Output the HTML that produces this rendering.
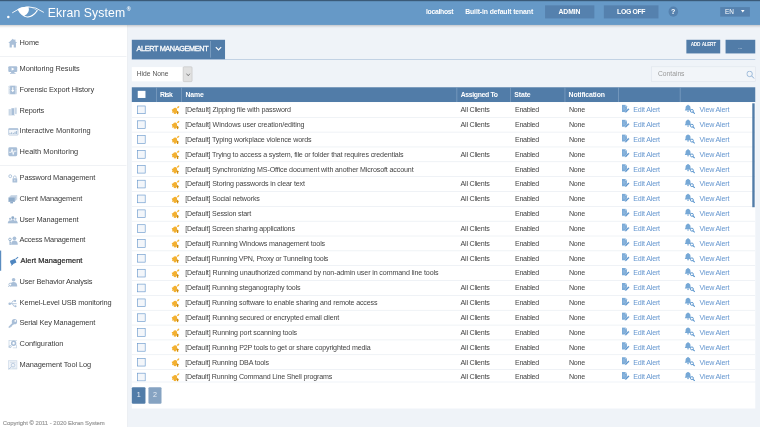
<!DOCTYPE html>
<html><head><meta charset="utf-8"><title>Ekran System</title>
<style>
html,body{margin:0;padding:0;width:760px;height:427px;overflow:hidden;background:#eff3f8;}
body{font-family:"Liberation Sans",sans-serif;}
#w{position:absolute;left:0;top:0;width:1280px;height:720px;transform:scale(0.59375);transform-origin:0 0;background:#eff3f8;color:#333;}
#in{position:absolute;left:-40px;top:-40px;width:1360px;height:800px;background:#eff3f8;filter:blur(0.5px)}
#c{position:absolute;left:40px;top:40px;width:1280px;height:720px}
#w div,#w span,#w a,#w b{white-space:nowrap}
#hd{position:absolute;left:-40px;top:-40px;width:1360px;height:82px;background:#6699c7;box-shadow:0 1px 4px rgba(0,0,0,.22);z-index:5}
#hdt{position:absolute;left:-40px;top:-40px;width:1360px;height:42px;background:#3a5a78;z-index:6}
#logo{position:absolute;left:0;top:0;z-index:7}
#brand{position:absolute;left:80.500px;top:8.500px;font-size:20.600px;line-height:24px;color:#fff;letter-spacing:.200px;z-index:7}
#brand sup{font-size:9px;font-weight:bold;position:absolute;left:133px;top:-4.500px;letter-spacing:0}
.ht{position:absolute;top:11.500px;font-size:11.500px;line-height:14px;font-weight:bold;color:#fff;z-index:7}
.hb{position:absolute;top:8.500px;height:22px;line-height:22px;background:#5581ae;color:#fff;font-size:11.500px;font-weight:bold;text-align:center;z-index:7;letter-spacing:-.200px}
#q{position:absolute;left:1125.500px;top:11.300px;width:16.600px;height:16.600px;border-radius:9px;background:#5581ae;color:#fff;font-size:12px;font-weight:bold;text-align:center;line-height:17px;z-index:7}
#lang{position:absolute;left:1213px;top:12.200px;width:49.500px;height:16.200px;background:#5581ae;color:#fff;font-size:10.800px;line-height:16.500px;z-index:7}
#lang span{position:absolute;left:8px}
#lang i{position:absolute;left:35px;top:4.800px;border:3.300px solid transparent;border-top:4.200px solid #fff;}
#sb{position:absolute;left:-40px;top:42px;width:254.600px;height:718px;background:#fff;border-right:1px solid #e3e7ec;box-sizing:border-box}
#sbi{position:absolute;left:40px;top:0;width:214px;height:678px}
.mi{position:absolute;left:0;width:213px;height:34px;font-size:12.500px;color:#3a3a3a;letter-spacing:-.180px}
.mi span{position:absolute;left:33px;top:7px;line-height:20px;transform:scaleY(1.05);transform-origin:0 72%}
.mi svg{position:absolute;left:13.500px;top:10.500px;overflow:visible}
.mi.active{color:#2c2c2c;-webkit-text-stroke:.400px #2c2c2c}
.mi.active u{position:absolute;left:0;top:0;width:2px;height:34px;background:#5b8dc0}
.mi.active span{left:34.500px}
.mi.active svg{left:15.500px}
.sep{position:absolute;left:0;width:213px;height:1px;background:#e6e9ee}
#copy{position:absolute;left:4.500px;top:706.500px;font-size:10px;color:#999;letter-spacing:-.040px;-webkit-text-stroke:.300px #999}
#tab{position:absolute;left:222.200px;top:66.800px;height:33px;width:156.600px;background:#517ca8;color:#fff}
#tab b{position:absolute;left:7.800px;top:7.200px;font-size:12.300px;line-height:16px;letter-spacing:-.620px;font-weight:normal;-webkit-text-stroke:.450px #fff}
#tab u{position:absolute;left:131.400px;top:2px;width:1px;height:28.500px;background:#94b1cf}
#tab svg{position:absolute;left:139.500px;top:11.200px}
#tl{position:absolute;left:222.200px;top:99.500px;width:1049.500px;height:1.100px;background:#a3bcd6}
.btn{position:absolute;top:66.500px;height:23.200px;background:#517ca8;color:#fff;font-size:8px;font-weight:bold;text-align:center;line-height:17.500px;letter-spacing:-.600px;word-spacing:1.500px}
#sel{position:absolute;left:222.300px;top:113px;width:86.100px;height:24px;background:#fff;font-size:11.300px;line-height:24px;color:#555}
#sel span{position:absolute;left:8px;top:-1.400px}
#selb{position:absolute;left:308.400px;top:112.200px;width:13.500px;height:24.200px;background:#e1e1e1;border:.800px solid #c2c2c2;border-radius:2px}
#selb svg{position:absolute;left:3.200px;top:9.500px}
#srch{position:absolute;left:1097.200px;top:112.300px;width:173.500px;height:23.800px;border:1px solid #dde3eb;background:#f2f5f9;font-size:11.300px;color:#999;line-height:24px}
#srch span{position:absolute;left:10px;top:-1px}
#srch svg{position:absolute;left:158.500px;top:6.200px}
#th{position:absolute;left:222.200px;top:147.200px;width:1049.500px;height:24.600px;background:#517ca8;color:#fff;font-size:11.600px;font-weight:bold;letter-spacing:-.300px}
#th div{position:absolute;top:0;height:24.600px;line-height:24.300px;border-left:1.200px solid #8aa9c9;padding-left:6px}
#th i{position:absolute;left:9.500px;top:6px;width:13px;height:12px;background:#fff}
#tb{position:absolute;left:222.200px;top:171.800px;width:1049.500px;height:470.900px;background:#fff;overflow:hidden}
.r{position:absolute;left:0;width:1049.500px;height:25px;font-size:12px;color:#444;letter-spacing:-.170px}
.r u{position:absolute;left:0;top:0;width:1049.500px;height:1.100px;background:#e4eaf0}
.r span{position:absolute;top:5.700px;line-height:14px;transform:scaleY(1.1);transform-origin:0 80%}
.r a{position:absolute;top:5.700px;line-height:14px;color:#6496cf;transform:scaleY(1.1);transform-origin:0 80%}
.r i{position:absolute;left:9.300px;top:5.800px;width:12px;height:12.200px;border:1.800px solid #6193ca;background:#f3f6fa}
.r .rk{position:absolute;left:66.500px;top:4.800px}
.r .ei{position:absolute;left:825px;top:4.500px}
.r .vi{position:absolute;left:931px;top:4px}
#scr{position:absolute;left:1267px;top:174px;width:3.700px;height:174.600px;background:#517ca8}
#pg{position:absolute;left:222.200px;top:642.700px;width:1049.500px;height:44.900px;border-top:1px solid #e9eef3;box-sizing:border-box;background:#fff}
.p{position:absolute;top:8.500px;width:22.700px;height:27.800px;border-radius:2px;color:#e8eef5;font-size:12px;text-align:center;line-height:26.500px}
</style></head><body><div id="w"><div id="in"><div id="c">

<div id="hd"></div><div id="hdt"></div>
<svg id="logo" width="80" height="42" viewBox="0 0 80 42"><circle cx="14" cy="28.700" r="2.100" fill="#fff"/><path d="M20.500 21.700 Q47 1.500 73.800 20.900" fill="none" stroke="#fff" stroke-width="1.500"/><path d="M29.200 15.500 Q46 6.500 64 17.500 Q55 30.200 46 29.300 Q36 28.300 29.200 15.500Z" fill="#fff"/><path d="M48.300 12.700 Q56 12.700 61.800 17.700 Q54.500 27.300 46.500 27.700 Q43.500 27.700 41 26.400 Q50.500 22 48.300 12.700Z" fill="#6699c7"/></svg>
<div id="brand">Ekran System<sup>&#174;</sup></div>
<div class="ht" style="left:717.500px;letter-spacing:-.500px">localhost</div>
<div class="ht" style="left:783.500px;letter-spacing:-.170px">Built-in default tenant</div>
<div class="hb" style="left:917.500px;width:83px">ADMIN</div>
<div class="hb" style="left:1017px;width:92px;letter-spacing:-.550px">LOG OFF</div>
<div id="q">?</div>
<div id="lang"><span>EN</span><i></i></div>

<div id="sb"><div id="sbi">
<div class="sep" style="top:52.7px"></div>
<div class="sep" style="top:235.9px"></div>
<div class="mi" style="top:12.4px"><svg width="15" height="15" viewBox="0 0 16 16"><path d="M8 0.500 L0 8 H2.300 V16 H6.300 V11 H9.700 V16 H13.700 V8 H16 L12.800 5 V1.500 H10.800 V3.100Z" fill="#a9bfd8"/></svg><span style="letter-spacing:-0.167px">Home</span></div>
<div class="mi" style="top:57.0px"><svg width="15" height="15" viewBox="0 0 16 16"><rect x="0" y="1.500" width="16" height="10.500" rx="2" fill="#a9bfd8"/><path d="M6 4 L11 6.800 L6 9.600Z" fill="#fff"/><path d="M5.500 12 H10.500 L11.500 14 H13 V15 H3 V14 H4.500Z" fill="#a9bfd8"/></svg><span style="letter-spacing:-0.126px">Monitoring Results</span></div>
<div class="mi" style="top:91.6px"><svg width="15" height="15" viewBox="0 0 16 16"><rect x="0.500" y="0.500" width="15" height="15" rx="1" fill="#c9d7e6"/><rect x="3.500" y="0.500" width="9" height="15" fill="#a9bfd8"/><path d="M1.300 2.500h1.400M1.300 5.500h1.400M1.300 8.500h1.400M1.300 11.500h1.400M1.300 14h1.400M13.300 2.500h1.400M13.300 5.500h1.400M13.300 8.500h1.400M13.300 11.500h1.400M13.300 14h1.400" stroke="#fff" stroke-width="1"/><path d="M7 3 H9 V8 H11 L8 12 L5 8 H7Z" fill="#fff"/></svg><span style="letter-spacing:-0.201px">Forensic Export History</span></div>
<div class="mi" style="top:127.0px"><svg width="15" height="15" viewBox="0 0 16 16"><rect x="0.500" y="4" width="5" height="11.500" fill="#c9d7e6"/><rect x="5" y="2" width="6.500" height="13.500" fill="#a9bfd8" stroke="#fff" stroke-width=".800"/><rect x="11" y="1" width="4.500" height="12" fill="#c9d7e6" stroke="#fff" stroke-width=".600"/></svg><span style="letter-spacing:-0.374px">Reports</span></div>
<div class="mi" style="top:161.2px"><svg width="15" height="15" viewBox="0 0 16 16"><rect x="0.600" y="2.600" width="16.800" height="11.800" rx="1.200" fill="#f4f7fb" stroke="#a9bfd8" stroke-width="1.200"/><rect x="0.600" y="2.600" width="16.800" height="2.400" fill="#a9bfd8"/><path d="M3 12.500v-2M6 12.500v-3M9 12.500v-2M12 12.500v-4M14.500 12.500v-5.500" stroke="#8eabc9" stroke-width="1.500"/></svg><span style="letter-spacing:0.015px">Interactive Monitoring</span></div>
<div class="mi" style="top:195.9px"><svg width="15" height="15" viewBox="0 0 16 16"><rect x="0" y="0" width="16" height="16" rx="2.500" fill="#a9bfd8"/><path d="M1.500 9 H5.500 L6.800 3.500 L8.800 13 L10.300 7 H14.500" fill="none" stroke="#fff" stroke-width="1.500"/></svg><span style="letter-spacing:0.049px">Health Monitoring</span></div>
<div class="mi" style="top:240.7px"><svg width="15" height="15" viewBox="0 0 16 16"><circle cx="3.500" cy="4" r="2.600" fill="none" stroke="#a9bfd8" stroke-width="1.600"/><rect x="7.500" y="7.500" width="8.500" height="8" rx="1" fill="#a9bfd8"/><path d="M9.300 7.500 V5.800 a2.400 2.400 0 0 1 4.800 0 V7.500" fill="none" stroke="#a9bfd8" stroke-width="1.500"/><rect x="11.200" y="10" width="1.200" height="3" fill="#fff"/></svg><span style="letter-spacing:-0.212px">Password Management</span></div>
<div class="mi" style="top:275.6px"><svg width="15" height="15" viewBox="0 0 16 16"><rect x="4" y="0.500" width="12" height="8.500" rx="1" fill="#c9d7e6"/><rect x="2" y="2.500" width="12" height="8.500" rx="1" fill="#a9bfd8" stroke="#fff" stroke-width=".500"/><rect x="0" y="4.500" width="12" height="8.500" rx="1" fill="#8eabc9" stroke="#fff" stroke-width=".500"/><rect x="3.500" y="13" width="5" height="2.500" fill="#8eabc9"/></svg><span style="letter-spacing:-0.175px">Client Management</span></div>
<div class="mi" style="top:310.5px"><svg width="15" height="15" viewBox="0 0 16 16"><circle cx="8" cy="3.800" r="2.600" fill="#8eabc9"/><circle cx="3.200" cy="6" r="2" fill="#a9bfd8"/><circle cx="12.800" cy="6" r="2" fill="#a9bfd8"/><path d="M-0.500 13 c0-3 1.500-4.700 3.600-4.700 c1 0 1.800 .400 2.300 1 c.500-1.800 1.300-2.600 2.600-2.600 s2.100 .800 2.600 2.600 c.500-.600 1.300-1 2.300-1 c2.100 0 3.600 1.700 3.600 4.700Z" fill="#a9bfd8"/><rect x="-1" y="12.300" width="18" height="1.700" rx=".800" fill="#8eabc9"/></svg><span style="letter-spacing:-0.256px">User Management</span></div>
<div class="mi" style="top:345.3px"><svg width="15" height="15" viewBox="0 0 16 16"><circle cx="11" cy="3.600" r="3.300" fill="#a9bfd8"/><path d="M5 15 c0-5.500 2.500-7.500 6-7.500 s6 2 6 7.500Z" fill="#a9bfd8"/><circle cx="3" cy="5.500" r="2.300" fill="#fff" stroke="#8eabc9" stroke-width="1.500"/><path d="M3 8 V15.500 M3 11.500 H5 M3 14 H5" fill="none" stroke="#8eabc9" stroke-width="1.400"/></svg><span style="letter-spacing:-0.374px">Access Management</span></div>
<div class="mi active" style="top:380.2px"><u></u><svg width="15" height="15" viewBox="0 0 16 16"><path d="M1 6.500 L10 3 L12.500 9.500 L4.500 13.500 C2 12 1 9.500 1 6.500Z" fill="#4f86c0"/><path d="M11 3.500 L15.500 0" stroke="#4f86c0" stroke-width="1.800"/><path d="M4 12 L2.500 16 L7 13Z" fill="#4f86c0"/></svg><span style="letter-spacing:0.147px">Alert Management</span></div>
<div class="mi" style="top:415.1px"><svg width="15" height="15" viewBox="0 0 16 16"><circle cx="9.500" cy="3.500" r="3.200" fill="#a9bfd8"/><path d="M3 15.500 c0-6 2.500-8 6.500-8 s6.500 2 6.500 8Z" fill="#a9bfd8"/><circle cx="3.500" cy="12" r="2.500" fill="#fff" stroke="#8eabc9" stroke-width="1.200"/><path d="M1.800 14 L0 16" stroke="#8eabc9" stroke-width="1.300"/></svg><span style="letter-spacing:-0.279px">User Behavior Analysis</span></div>
<div class="mi" style="top:450.0px"><svg width="15" height="15" viewBox="0 0 16 16"><path d="M2 9 H15 M5 9 L8.500 4 H11 M7 9 L10 13.500 H12.500" fill="none" stroke="#a9bfd8" stroke-width="1.500"/><circle cx="2.500" cy="9" r="2.300" fill="#a9bfd8"/><rect x="10.500" y="2.300" width="3.400" height="3.400" fill="#a9bfd8"/><circle cx="13" cy="13.500" r="1.800" fill="#a9bfd8"/></svg><span style="letter-spacing:-0.239px">Kernel-Level USB monitoring</span></div>
<div class="mi" style="top:484.9px"><svg width="15" height="15" viewBox="0 0 16 16"><circle cx="11" cy="5" r="4.800" fill="#a9bfd8"/><circle cx="12.500" cy="3.800" r="1.500" fill="#fff"/><path d="M7.500 7 L0.500 14 V16 H3.500 L4.200 14.200 H6 L6.500 12.300 L10 9.500Z" fill="#a9bfd8"/></svg><span style="letter-spacing:-0.292px">Serial Key Management</span></div>
<div class="mi" style="top:519.7px"><svg width="15" height="15" viewBox="0 0 16 16"><path d="M0.500 0.500 H15.500 V2 H2 V15 H0.500Z M15.500 9 V15.500 H8 V14 H14 V9Z" fill="#c9d7e6"/><circle cx="9.500" cy="6.500" r="3.500" fill="none" stroke="#a9bfd8" stroke-width="2.800"/><circle cx="3.500" cy="12.500" r="1.800" fill="none" stroke="#a9bfd8" stroke-width="1.600"/></svg><span style="letter-spacing:-0.054px">Configuration</span></div>
<div class="mi" style="top:554.6px"><svg width="15" height="15" viewBox="0 0 16 16"><rect x="0.600" y="0.600" width="14.800" height="14.800" fill="#f0f4f9" stroke="#c9d7e6" stroke-width="1.200"/><path d="M3 3.500 H13" stroke="#c9d7e6" stroke-width="1.200"/><circle cx="8.500" cy="8.500" r="3.300" fill="none" stroke="#a9bfd8" stroke-width="1.200"/><path d="M6 11 L1 16" stroke="#a9bfd8" stroke-width="1.500"/><path d="M7 14 H14" stroke="#c9d7e6" stroke-width="1"/></svg><span style="letter-spacing:-0.169px">Management Tool Log</span></div>
</div></div>
<div id="copy">Copyright &#169; 2011 - 2020 Ekran System</div>
<div id="tab"><b>ALERT MANAGEMENT</b><u></u><svg width="12" height="8" viewBox="0 0 12 8"><path d="M1.500 1.500 L6 6 L10.500 1.500" fill="none" stroke="#fff" stroke-width="1.900"/></svg></div>
<div id="tl"></div>
<div class="btn" style="left:1155.900px;width:57.100px">ADD ALERT</div>
<div class="btn" style="left:1221.900px;width:49.800px;line-height:26px;letter-spacing:0;font-weight:normal">...</div>
<div id="sel"><span>Hide None</span></div><div id="selb"><svg width="8" height="6" viewBox="0 0 8 6"><path d="M1 1 L4 4.500 L7 1" fill="none" stroke="#555" stroke-width="1.200"/></svg></div>
<div id="srch"><span>Contains</span><svg width="14" height="14" viewBox="0 0 14 14"><circle cx="5.500" cy="5.500" r="4.600" fill="none" stroke="#86aad2" stroke-width="1.300"/><path d="M9 9 L13.300 13.300" stroke="#86aad2" stroke-width="1.600"/></svg></div>

<div id="th"><i></i>
<div style="left:40.4px;letter-spacing:-1.000px">Risk</div>
<div style="left:83.1px;letter-spacing:-0.165px">Name</div>
<div style="left:546.7px;letter-spacing:-0.592px">Assigned To</div>
<div style="left:636.8px;letter-spacing:-0.147px">State</div>
<div style="left:728.4px;letter-spacing:-0.232px">Notification</div>
<div style="left:818.5px;letter-spacing:0.000px"></div>
<div style="left:923.0px;letter-spacing:0.000px"></div>
</div><div id="tb">
<div class="r" style="top:0.10px"><u style="top:25.1px"></u><i></i><svg class="rk" width="14" height="16" viewBox="0 0 14 16"><path transform="translate(-0.500 0)" d="M0 7.300 L2.800 7 L4.500 4.800 L7.500 4.400 L9.600 6.600 L9.800 9.500 L9 13 L7 15 L4.200 14.600 L4 12.300 L1 13 L2 10.300Z" fill="#f3b030"/><path d="M8.300 5.600 L10.200 4.200" stroke="#f3b030" stroke-width="1.200"/><ellipse cx="11.200" cy="3.400" rx="2.300" ry="1.300" transform="rotate(-45 11.200 3.400)" fill="#f5b63c"/><path d="M10.100 9.600 L12.600 12.600 H11.200 V15.600 H9 V12.600 H7.600Z" fill="#d18d0a"/></svg><span style="left:89.7px;letter-spacing:-0.204px">[Default] Zipping file with password</span><span style="left:553.5px;letter-spacing:-0.415px">All Clients</span><span style="left:645.2px;letter-spacing:-0.546px">Enabled</span><span style="left:736.1px;letter-spacing:-0.482px">None</span><svg class="ei" width="14" height="15" viewBox="0 0 14 15"><path d="M0.600 0.500 H6.600 L8.900 2.800 V12.500 H0.600Z" fill="#7aaad7"/><path d="M6.300 0.800 V3.100 H8.600" fill="none" stroke="#dfeaf5" stroke-width=".800"/><path d="M2.300 4.500h3M2.300 6.500h4.500M2.300 8.500h3.500" stroke="#a9c7e6" stroke-width=".700"/><path d="M5.200 14 L5.800 11.500 L11.300 6.200 L13.200 8.100 L7.700 13.500Z" fill="#5a93cc" stroke="#fff" stroke-width=".600"/></svg><a style="left:844.4px;letter-spacing:-0.319px">Edit Alert</a><svg class="vi" width="18" height="16" viewBox="0 0 18 16"><path d="M5.800 0 c0.700 0 1.100 0.400 1.100 1.100 c2.300 0.700 3.100 2.600 3.100 5.200 c0 1.800 0.700 2.800 1.600 3.700 H0 c0.900-0.900 1.600-1.900 1.600-3.700 c0-2.600 0.800-4.500 3.100-5.200 c0-0.700 0.400-1.100 1.100-1.100Z" fill="#76a8d6"/><circle cx="5.800" cy="11.300" r="1.400" fill="#76a8d6"/><circle cx="12.300" cy="10.800" r="2.500" fill="#fff" stroke="#5f98cf" stroke-width="1.600"/><path d="M14.300 12.800 L16.600 15.100" stroke="#5f98cf" stroke-width="1.900" stroke-linecap="round"/></svg><a style="left:956.1px;letter-spacing:-0.331px">View Alert</a></div>
<div class="r" style="top:25.10px"><u style="top:25.1px"></u><i></i><svg class="rk" width="14" height="16" viewBox="0 0 14 16"><path transform="translate(-0.500 0)" d="M0 7.300 L2.800 7 L4.500 4.800 L7.500 4.400 L9.600 6.600 L9.800 9.500 L9 13 L7 15 L4.200 14.600 L4 12.300 L1 13 L2 10.300Z" fill="#f3b030"/><path d="M8.300 5.600 L10.200 4.200" stroke="#f3b030" stroke-width="1.200"/><ellipse cx="11.200" cy="3.400" rx="2.300" ry="1.300" transform="rotate(-45 11.200 3.400)" fill="#f5b63c"/><path d="M10.100 9.600 L12.600 12.600 H11.200 V15.600 H9 V12.600 H7.600Z" fill="#d18d0a"/></svg><span style="left:89.7px;letter-spacing:-0.187px">[Default] Windows user creation/editing</span><span style="left:553.5px;letter-spacing:-0.415px">All Clients</span><span style="left:645.2px;letter-spacing:-0.546px">Enabled</span><span style="left:736.1px;letter-spacing:-0.482px">None</span><svg class="ei" width="14" height="15" viewBox="0 0 14 15"><path d="M0.600 0.500 H6.600 L8.900 2.800 V12.500 H0.600Z" fill="#7aaad7"/><path d="M6.300 0.800 V3.100 H8.600" fill="none" stroke="#dfeaf5" stroke-width=".800"/><path d="M2.300 4.500h3M2.300 6.500h4.500M2.300 8.500h3.500" stroke="#a9c7e6" stroke-width=".700"/><path d="M5.200 14 L5.800 11.500 L11.300 6.200 L13.200 8.100 L7.700 13.500Z" fill="#5a93cc" stroke="#fff" stroke-width=".600"/></svg><a style="left:844.4px;letter-spacing:-0.319px">Edit Alert</a><svg class="vi" width="18" height="16" viewBox="0 0 18 16"><path d="M5.800 0 c0.700 0 1.100 0.400 1.100 1.100 c2.300 0.700 3.100 2.600 3.100 5.200 c0 1.800 0.700 2.800 1.600 3.700 H0 c0.900-0.900 1.600-1.900 1.600-3.700 c0-2.600 0.800-4.500 3.100-5.200 c0-0.700 0.400-1.100 1.100-1.100Z" fill="#76a8d6"/><circle cx="5.800" cy="11.300" r="1.400" fill="#76a8d6"/><circle cx="12.300" cy="10.800" r="2.500" fill="#fff" stroke="#5f98cf" stroke-width="1.600"/><path d="M14.300 12.800 L16.600 15.100" stroke="#5f98cf" stroke-width="1.900" stroke-linecap="round"/></svg><a style="left:956.1px;letter-spacing:-0.331px">View Alert</a></div>
<div class="r" style="top:50.10px"><u style="top:25.1px"></u><i></i><svg class="rk" width="14" height="16" viewBox="0 0 14 16"><path transform="translate(-0.500 0)" d="M0 7.300 L2.800 7 L4.500 4.800 L7.500 4.400 L9.600 6.600 L9.800 9.500 L9 13 L7 15 L4.200 14.600 L4 12.300 L1 13 L2 10.300Z" fill="#f3b030"/><path d="M8.300 5.600 L10.200 4.200" stroke="#f3b030" stroke-width="1.200"/><ellipse cx="11.200" cy="3.400" rx="2.300" ry="1.300" transform="rotate(-45 11.200 3.400)" fill="#f5b63c"/><path d="M10.100 9.600 L12.600 12.600 H11.200 V15.600 H9 V12.600 H7.600Z" fill="#d18d0a"/></svg><span style="left:89.7px;letter-spacing:-0.256px">[Default] Typing workplace violence words</span><span style="left:553.5px;letter-spacing:-0.415px"></span><span style="left:645.2px;letter-spacing:-0.546px">Enabled</span><span style="left:736.1px;letter-spacing:-0.482px">None</span><svg class="ei" width="14" height="15" viewBox="0 0 14 15"><path d="M0.600 0.500 H6.600 L8.900 2.800 V12.500 H0.600Z" fill="#7aaad7"/><path d="M6.300 0.800 V3.100 H8.600" fill="none" stroke="#dfeaf5" stroke-width=".800"/><path d="M2.300 4.500h3M2.300 6.500h4.500M2.300 8.500h3.500" stroke="#a9c7e6" stroke-width=".700"/><path d="M5.200 14 L5.800 11.500 L11.300 6.200 L13.200 8.100 L7.700 13.500Z" fill="#5a93cc" stroke="#fff" stroke-width=".600"/></svg><a style="left:844.4px;letter-spacing:-0.319px">Edit Alert</a><svg class="vi" width="18" height="16" viewBox="0 0 18 16"><path d="M5.800 0 c0.700 0 1.100 0.400 1.100 1.100 c2.300 0.700 3.100 2.600 3.100 5.200 c0 1.800 0.700 2.800 1.600 3.700 H0 c0.900-0.900 1.600-1.900 1.600-3.700 c0-2.600 0.800-4.500 3.100-5.200 c0-0.700 0.400-1.100 1.100-1.100Z" fill="#76a8d6"/><circle cx="5.800" cy="11.300" r="1.400" fill="#76a8d6"/><circle cx="12.300" cy="10.800" r="2.500" fill="#fff" stroke="#5f98cf" stroke-width="1.600"/><path d="M14.300 12.800 L16.600 15.100" stroke="#5f98cf" stroke-width="1.900" stroke-linecap="round"/></svg><a style="left:956.1px;letter-spacing:-0.331px">View Alert</a></div>
<div class="r" style="top:75.10px"><u style="top:25.1px"></u><i></i><svg class="rk" width="14" height="16" viewBox="0 0 14 16"><path transform="translate(-0.500 0)" d="M0 7.300 L2.800 7 L4.500 4.800 L7.500 4.400 L9.600 6.600 L9.800 9.500 L9 13 L7 15 L4.200 14.600 L4 12.300 L1 13 L2 10.300Z" fill="#f3b030"/><path d="M8.300 5.600 L10.200 4.200" stroke="#f3b030" stroke-width="1.200"/><ellipse cx="11.200" cy="3.400" rx="2.300" ry="1.300" transform="rotate(-45 11.200 3.400)" fill="#f5b63c"/><path d="M10.100 9.600 L12.600 12.600 H11.200 V15.600 H9 V12.600 H7.600Z" fill="#d18d0a"/></svg><span style="left:89.7px;letter-spacing:-0.249px">[Default] Trying to access a system, file or folder that requires credentials</span><span style="left:553.5px;letter-spacing:-0.415px">All Clients</span><span style="left:645.2px;letter-spacing:-0.546px">Enabled</span><span style="left:736.1px;letter-spacing:-0.482px">None</span><svg class="ei" width="14" height="15" viewBox="0 0 14 15"><path d="M0.600 0.500 H6.600 L8.900 2.800 V12.500 H0.600Z" fill="#7aaad7"/><path d="M6.300 0.800 V3.100 H8.600" fill="none" stroke="#dfeaf5" stroke-width=".800"/><path d="M2.300 4.500h3M2.300 6.500h4.500M2.300 8.500h3.500" stroke="#a9c7e6" stroke-width=".700"/><path d="M5.200 14 L5.800 11.500 L11.300 6.200 L13.200 8.100 L7.700 13.500Z" fill="#5a93cc" stroke="#fff" stroke-width=".600"/></svg><a style="left:844.4px;letter-spacing:-0.319px">Edit Alert</a><svg class="vi" width="18" height="16" viewBox="0 0 18 16"><path d="M5.800 0 c0.700 0 1.100 0.400 1.100 1.100 c2.300 0.700 3.100 2.600 3.100 5.200 c0 1.800 0.700 2.800 1.600 3.700 H0 c0.900-0.900 1.600-1.900 1.600-3.700 c0-2.600 0.800-4.500 3.100-5.200 c0-0.700 0.400-1.100 1.100-1.100Z" fill="#76a8d6"/><circle cx="5.800" cy="11.300" r="1.400" fill="#76a8d6"/><circle cx="12.300" cy="10.800" r="2.500" fill="#fff" stroke="#5f98cf" stroke-width="1.600"/><path d="M14.300 12.800 L16.600 15.100" stroke="#5f98cf" stroke-width="1.900" stroke-linecap="round"/></svg><a style="left:956.1px;letter-spacing:-0.331px">View Alert</a></div>
<div class="r" style="top:100.10px"><u style="top:25.1px"></u><i></i><svg class="rk" width="14" height="16" viewBox="0 0 14 16"><path transform="translate(-0.500 0)" d="M0 7.300 L2.800 7 L4.500 4.800 L7.500 4.400 L9.600 6.600 L9.800 9.500 L9 13 L7 15 L4.200 14.600 L4 12.300 L1 13 L2 10.300Z" fill="#f3b030"/><path d="M8.300 5.600 L10.200 4.200" stroke="#f3b030" stroke-width="1.200"/><ellipse cx="11.200" cy="3.400" rx="2.300" ry="1.300" transform="rotate(-45 11.200 3.400)" fill="#f5b63c"/><path d="M10.100 9.600 L12.600 12.600 H11.200 V15.600 H9 V12.600 H7.600Z" fill="#d18d0a"/></svg><span style="left:89.7px;letter-spacing:-0.239px">[Default] Synchronizing MS-Office document with another Microsoft account</span><span style="left:553.5px;letter-spacing:-0.415px"></span><span style="left:645.2px;letter-spacing:-0.546px">Enabled</span><span style="left:736.1px;letter-spacing:-0.482px">None</span><svg class="ei" width="14" height="15" viewBox="0 0 14 15"><path d="M0.600 0.500 H6.600 L8.900 2.800 V12.500 H0.600Z" fill="#7aaad7"/><path d="M6.300 0.800 V3.100 H8.600" fill="none" stroke="#dfeaf5" stroke-width=".800"/><path d="M2.300 4.500h3M2.300 6.500h4.500M2.300 8.500h3.500" stroke="#a9c7e6" stroke-width=".700"/><path d="M5.200 14 L5.800 11.500 L11.300 6.200 L13.200 8.100 L7.700 13.500Z" fill="#5a93cc" stroke="#fff" stroke-width=".600"/></svg><a style="left:844.4px;letter-spacing:-0.319px">Edit Alert</a><svg class="vi" width="18" height="16" viewBox="0 0 18 16"><path d="M5.800 0 c0.700 0 1.100 0.400 1.100 1.100 c2.300 0.700 3.100 2.600 3.100 5.200 c0 1.800 0.700 2.800 1.600 3.700 H0 c0.900-0.900 1.600-1.900 1.600-3.700 c0-2.600 0.800-4.500 3.100-5.200 c0-0.700 0.400-1.100 1.100-1.100Z" fill="#76a8d6"/><circle cx="5.800" cy="11.300" r="1.400" fill="#76a8d6"/><circle cx="12.300" cy="10.800" r="2.500" fill="#fff" stroke="#5f98cf" stroke-width="1.600"/><path d="M14.300 12.800 L16.600 15.100" stroke="#5f98cf" stroke-width="1.900" stroke-linecap="round"/></svg><a style="left:956.1px;letter-spacing:-0.331px">View Alert</a></div>
<div class="r" style="top:125.10px"><u style="top:25.1px"></u><i></i><svg class="rk" width="14" height="16" viewBox="0 0 14 16"><path transform="translate(-0.500 0)" d="M0 7.300 L2.800 7 L4.500 4.800 L7.500 4.400 L9.600 6.600 L9.800 9.500 L9 13 L7 15 L4.200 14.600 L4 12.300 L1 13 L2 10.300Z" fill="#f3b030"/><path d="M8.300 5.600 L10.200 4.200" stroke="#f3b030" stroke-width="1.200"/><ellipse cx="11.200" cy="3.400" rx="2.300" ry="1.300" transform="rotate(-45 11.200 3.400)" fill="#f5b63c"/><path d="M10.100 9.600 L12.600 12.600 H11.200 V15.600 H9 V12.600 H7.600Z" fill="#d18d0a"/></svg><span style="left:89.7px;letter-spacing:-0.243px">[Default] Storing passwords in clear text</span><span style="left:553.5px;letter-spacing:-0.415px">All Clients</span><span style="left:645.2px;letter-spacing:-0.546px">Enabled</span><span style="left:736.1px;letter-spacing:-0.482px">None</span><svg class="ei" width="14" height="15" viewBox="0 0 14 15"><path d="M0.600 0.500 H6.600 L8.900 2.800 V12.500 H0.600Z" fill="#7aaad7"/><path d="M6.300 0.800 V3.100 H8.600" fill="none" stroke="#dfeaf5" stroke-width=".800"/><path d="M2.300 4.500h3M2.300 6.500h4.500M2.300 8.500h3.500" stroke="#a9c7e6" stroke-width=".700"/><path d="M5.200 14 L5.800 11.500 L11.300 6.200 L13.200 8.100 L7.700 13.500Z" fill="#5a93cc" stroke="#fff" stroke-width=".600"/></svg><a style="left:844.4px;letter-spacing:-0.319px">Edit Alert</a><svg class="vi" width="18" height="16" viewBox="0 0 18 16"><path d="M5.800 0 c0.700 0 1.100 0.400 1.100 1.100 c2.300 0.700 3.100 2.600 3.100 5.200 c0 1.800 0.700 2.800 1.600 3.700 H0 c0.900-0.900 1.600-1.900 1.600-3.700 c0-2.600 0.800-4.500 3.100-5.200 c0-0.700 0.400-1.100 1.100-1.100Z" fill="#76a8d6"/><circle cx="5.800" cy="11.300" r="1.400" fill="#76a8d6"/><circle cx="12.300" cy="10.800" r="2.500" fill="#fff" stroke="#5f98cf" stroke-width="1.600"/><path d="M14.300 12.800 L16.600 15.100" stroke="#5f98cf" stroke-width="1.900" stroke-linecap="round"/></svg><a style="left:956.1px;letter-spacing:-0.331px">View Alert</a></div>
<div class="r" style="top:150.10px"><u style="top:25.1px"></u><i></i><svg class="rk" width="14" height="16" viewBox="0 0 14 16"><path transform="translate(-0.500 0)" d="M0 7.300 L2.800 7 L4.500 4.800 L7.500 4.400 L9.600 6.600 L9.800 9.500 L9 13 L7 15 L4.200 14.600 L4 12.300 L1 13 L2 10.300Z" fill="#f3b030"/><path d="M8.300 5.600 L10.200 4.200" stroke="#f3b030" stroke-width="1.200"/><ellipse cx="11.200" cy="3.400" rx="2.300" ry="1.300" transform="rotate(-45 11.200 3.400)" fill="#f5b63c"/><path d="M10.100 9.600 L12.600 12.600 H11.200 V15.600 H9 V12.600 H7.600Z" fill="#d18d0a"/></svg><span style="left:89.7px;letter-spacing:-0.262px">[Default] Social networks</span><span style="left:553.5px;letter-spacing:-0.415px">All Clients</span><span style="left:645.2px;letter-spacing:-0.546px">Enabled</span><span style="left:736.1px;letter-spacing:-0.482px">None</span><svg class="ei" width="14" height="15" viewBox="0 0 14 15"><path d="M0.600 0.500 H6.600 L8.900 2.800 V12.500 H0.600Z" fill="#7aaad7"/><path d="M6.300 0.800 V3.100 H8.600" fill="none" stroke="#dfeaf5" stroke-width=".800"/><path d="M2.300 4.500h3M2.300 6.500h4.500M2.300 8.500h3.500" stroke="#a9c7e6" stroke-width=".700"/><path d="M5.200 14 L5.800 11.500 L11.300 6.200 L13.200 8.100 L7.700 13.500Z" fill="#5a93cc" stroke="#fff" stroke-width=".600"/></svg><a style="left:844.4px;letter-spacing:-0.319px">Edit Alert</a><svg class="vi" width="18" height="16" viewBox="0 0 18 16"><path d="M5.800 0 c0.700 0 1.100 0.400 1.100 1.100 c2.300 0.700 3.100 2.600 3.100 5.200 c0 1.800 0.700 2.800 1.600 3.700 H0 c0.900-0.900 1.600-1.900 1.600-3.700 c0-2.600 0.800-4.500 3.100-5.200 c0-0.700 0.400-1.100 1.100-1.100Z" fill="#76a8d6"/><circle cx="5.800" cy="11.300" r="1.400" fill="#76a8d6"/><circle cx="12.300" cy="10.800" r="2.500" fill="#fff" stroke="#5f98cf" stroke-width="1.600"/><path d="M14.300 12.800 L16.600 15.100" stroke="#5f98cf" stroke-width="1.900" stroke-linecap="round"/></svg><a style="left:956.1px;letter-spacing:-0.331px">View Alert</a></div>
<div class="r" style="top:175.10px"><u style="top:25.1px"></u><i></i><svg class="rk" width="14" height="16" viewBox="0 0 14 16"><path transform="translate(-0.500 0)" d="M0 7.300 L2.800 7 L4.500 4.800 L7.500 4.400 L9.600 6.600 L9.800 9.500 L9 13 L7 15 L4.200 14.600 L4 12.300 L1 13 L2 10.300Z" fill="#f3b030"/><path d="M8.300 5.600 L10.200 4.200" stroke="#f3b030" stroke-width="1.200"/><ellipse cx="11.200" cy="3.400" rx="2.300" ry="1.300" transform="rotate(-45 11.200 3.400)" fill="#f5b63c"/><path d="M10.100 9.600 L12.600 12.600 H11.200 V15.600 H9 V12.600 H7.600Z" fill="#d18d0a"/></svg><span style="left:89.7px;letter-spacing:-0.277px">[Default] Session start</span><span style="left:553.5px;letter-spacing:-0.415px"></span><span style="left:645.2px;letter-spacing:-0.546px">Enabled</span><span style="left:736.1px;letter-spacing:-0.482px">None</span><svg class="ei" width="14" height="15" viewBox="0 0 14 15"><path d="M0.600 0.500 H6.600 L8.900 2.800 V12.500 H0.600Z" fill="#7aaad7"/><path d="M6.300 0.800 V3.100 H8.600" fill="none" stroke="#dfeaf5" stroke-width=".800"/><path d="M2.300 4.500h3M2.300 6.500h4.500M2.300 8.500h3.500" stroke="#a9c7e6" stroke-width=".700"/><path d="M5.200 14 L5.800 11.500 L11.300 6.200 L13.200 8.100 L7.700 13.500Z" fill="#5a93cc" stroke="#fff" stroke-width=".600"/></svg><a style="left:844.4px;letter-spacing:-0.319px">Edit Alert</a><svg class="vi" width="18" height="16" viewBox="0 0 18 16"><path d="M5.800 0 c0.700 0 1.100 0.400 1.100 1.100 c2.300 0.700 3.100 2.600 3.100 5.200 c0 1.800 0.700 2.800 1.600 3.700 H0 c0.900-0.900 1.600-1.900 1.600-3.700 c0-2.600 0.800-4.500 3.100-5.200 c0-0.700 0.400-1.100 1.100-1.100Z" fill="#76a8d6"/><circle cx="5.800" cy="11.300" r="1.400" fill="#76a8d6"/><circle cx="12.300" cy="10.800" r="2.500" fill="#fff" stroke="#5f98cf" stroke-width="1.600"/><path d="M14.300 12.800 L16.600 15.100" stroke="#5f98cf" stroke-width="1.900" stroke-linecap="round"/></svg><a style="left:956.1px;letter-spacing:-0.331px">View Alert</a></div>
<div class="r" style="top:200.10px"><u style="top:25.1px"></u><i></i><svg class="rk" width="14" height="16" viewBox="0 0 14 16"><path transform="translate(-0.500 0)" d="M0 7.300 L2.800 7 L4.500 4.800 L7.500 4.400 L9.600 6.600 L9.800 9.500 L9 13 L7 15 L4.200 14.600 L4 12.300 L1 13 L2 10.300Z" fill="#f3b030"/><path d="M8.300 5.600 L10.200 4.200" stroke="#f3b030" stroke-width="1.200"/><ellipse cx="11.200" cy="3.400" rx="2.300" ry="1.300" transform="rotate(-45 11.200 3.400)" fill="#f5b63c"/><path d="M10.100 9.600 L12.600 12.600 H11.200 V15.600 H9 V12.600 H7.600Z" fill="#d18d0a"/></svg><span style="left:89.7px;letter-spacing:-0.293px">[Default] Screen sharing applications</span><span style="left:553.5px;letter-spacing:-0.415px">All Clients</span><span style="left:645.2px;letter-spacing:-0.546px">Enabled</span><span style="left:736.1px;letter-spacing:-0.482px">None</span><svg class="ei" width="14" height="15" viewBox="0 0 14 15"><path d="M0.600 0.500 H6.600 L8.900 2.800 V12.500 H0.600Z" fill="#7aaad7"/><path d="M6.300 0.800 V3.100 H8.600" fill="none" stroke="#dfeaf5" stroke-width=".800"/><path d="M2.300 4.500h3M2.300 6.500h4.500M2.300 8.500h3.500" stroke="#a9c7e6" stroke-width=".700"/><path d="M5.200 14 L5.800 11.500 L11.300 6.200 L13.200 8.100 L7.700 13.500Z" fill="#5a93cc" stroke="#fff" stroke-width=".600"/></svg><a style="left:844.4px;letter-spacing:-0.319px">Edit Alert</a><svg class="vi" width="18" height="16" viewBox="0 0 18 16"><path d="M5.800 0 c0.700 0 1.100 0.400 1.100 1.100 c2.300 0.700 3.100 2.600 3.100 5.200 c0 1.800 0.700 2.800 1.600 3.700 H0 c0.900-0.900 1.600-1.900 1.600-3.700 c0-2.600 0.800-4.500 3.100-5.200 c0-0.700 0.400-1.100 1.100-1.100Z" fill="#76a8d6"/><circle cx="5.800" cy="11.300" r="1.400" fill="#76a8d6"/><circle cx="12.300" cy="10.800" r="2.500" fill="#fff" stroke="#5f98cf" stroke-width="1.600"/><path d="M14.300 12.800 L16.600 15.100" stroke="#5f98cf" stroke-width="1.900" stroke-linecap="round"/></svg><a style="left:956.1px;letter-spacing:-0.331px">View Alert</a></div>
<div class="r" style="top:225.10px"><u style="top:25.1px"></u><i></i><svg class="rk" width="14" height="16" viewBox="0 0 14 16"><path transform="translate(-0.500 0)" d="M0 7.300 L2.800 7 L4.500 4.800 L7.500 4.400 L9.600 6.600 L9.800 9.500 L9 13 L7 15 L4.200 14.600 L4 12.300 L1 13 L2 10.300Z" fill="#f3b030"/><path d="M8.300 5.600 L10.200 4.200" stroke="#f3b030" stroke-width="1.200"/><ellipse cx="11.200" cy="3.400" rx="2.300" ry="1.300" transform="rotate(-45 11.200 3.400)" fill="#f5b63c"/><path d="M10.100 9.600 L12.600 12.600 H11.200 V15.600 H9 V12.600 H7.600Z" fill="#d18d0a"/></svg><span style="left:89.7px;letter-spacing:-0.269px">[Default] Running Windows management tools</span><span style="left:553.5px;letter-spacing:-0.415px">All Clients</span><span style="left:645.2px;letter-spacing:-0.546px">Enabled</span><span style="left:736.1px;letter-spacing:-0.482px">None</span><svg class="ei" width="14" height="15" viewBox="0 0 14 15"><path d="M0.600 0.500 H6.600 L8.900 2.800 V12.500 H0.600Z" fill="#7aaad7"/><path d="M6.300 0.800 V3.100 H8.600" fill="none" stroke="#dfeaf5" stroke-width=".800"/><path d="M2.300 4.500h3M2.300 6.500h4.500M2.300 8.500h3.500" stroke="#a9c7e6" stroke-width=".700"/><path d="M5.200 14 L5.800 11.500 L11.300 6.200 L13.200 8.100 L7.700 13.500Z" fill="#5a93cc" stroke="#fff" stroke-width=".600"/></svg><a style="left:844.4px;letter-spacing:-0.319px">Edit Alert</a><svg class="vi" width="18" height="16" viewBox="0 0 18 16"><path d="M5.800 0 c0.700 0 1.100 0.400 1.100 1.100 c2.300 0.700 3.100 2.600 3.100 5.200 c0 1.800 0.700 2.800 1.600 3.700 H0 c0.900-0.900 1.600-1.900 1.600-3.700 c0-2.600 0.800-4.500 3.100-5.200 c0-0.700 0.400-1.100 1.100-1.100Z" fill="#76a8d6"/><circle cx="5.800" cy="11.300" r="1.400" fill="#76a8d6"/><circle cx="12.300" cy="10.800" r="2.500" fill="#fff" stroke="#5f98cf" stroke-width="1.600"/><path d="M14.300 12.800 L16.600 15.100" stroke="#5f98cf" stroke-width="1.900" stroke-linecap="round"/></svg><a style="left:956.1px;letter-spacing:-0.331px">View Alert</a></div>
<div class="r" style="top:250.10px"><u style="top:25.1px"></u><i></i><svg class="rk" width="14" height="16" viewBox="0 0 14 16"><path transform="translate(-0.500 0)" d="M0 7.300 L2.800 7 L4.500 4.800 L7.500 4.400 L9.600 6.600 L9.800 9.500 L9 13 L7 15 L4.200 14.600 L4 12.300 L1 13 L2 10.300Z" fill="#f3b030"/><path d="M8.300 5.600 L10.200 4.200" stroke="#f3b030" stroke-width="1.200"/><ellipse cx="11.200" cy="3.400" rx="2.300" ry="1.300" transform="rotate(-45 11.200 3.400)" fill="#f5b63c"/><path d="M10.100 9.600 L12.600 12.600 H11.200 V15.600 H9 V12.600 H7.600Z" fill="#d18d0a"/></svg><span style="left:89.7px;letter-spacing:-0.325px">[Default] Running VPN, Proxy or Tunneling tools</span><span style="left:553.5px;letter-spacing:-0.415px">All Clients</span><span style="left:645.2px;letter-spacing:-0.546px">Enabled</span><span style="left:736.1px;letter-spacing:-0.482px">None</span><svg class="ei" width="14" height="15" viewBox="0 0 14 15"><path d="M0.600 0.500 H6.600 L8.900 2.800 V12.500 H0.600Z" fill="#7aaad7"/><path d="M6.300 0.800 V3.100 H8.600" fill="none" stroke="#dfeaf5" stroke-width=".800"/><path d="M2.300 4.500h3M2.300 6.500h4.500M2.300 8.500h3.500" stroke="#a9c7e6" stroke-width=".700"/><path d="M5.200 14 L5.800 11.500 L11.300 6.200 L13.200 8.100 L7.700 13.500Z" fill="#5a93cc" stroke="#fff" stroke-width=".600"/></svg><a style="left:844.4px;letter-spacing:-0.319px">Edit Alert</a><svg class="vi" width="18" height="16" viewBox="0 0 18 16"><path d="M5.800 0 c0.700 0 1.100 0.400 1.100 1.100 c2.300 0.700 3.100 2.600 3.100 5.200 c0 1.800 0.700 2.800 1.600 3.700 H0 c0.900-0.900 1.600-1.900 1.600-3.700 c0-2.600 0.800-4.500 3.100-5.200 c0-0.700 0.400-1.100 1.100-1.100Z" fill="#76a8d6"/><circle cx="5.800" cy="11.300" r="1.400" fill="#76a8d6"/><circle cx="12.300" cy="10.800" r="2.500" fill="#fff" stroke="#5f98cf" stroke-width="1.600"/><path d="M14.300 12.800 L16.600 15.100" stroke="#5f98cf" stroke-width="1.900" stroke-linecap="round"/></svg><a style="left:956.1px;letter-spacing:-0.331px">View Alert</a></div>
<div class="r" style="top:275.10px"><u style="top:25.1px"></u><i></i><svg class="rk" width="14" height="16" viewBox="0 0 14 16"><path transform="translate(-0.500 0)" d="M0 7.300 L2.800 7 L4.500 4.800 L7.500 4.400 L9.600 6.600 L9.800 9.500 L9 13 L7 15 L4.200 14.600 L4 12.300 L1 13 L2 10.300Z" fill="#f3b030"/><path d="M8.300 5.600 L10.200 4.200" stroke="#f3b030" stroke-width="1.200"/><ellipse cx="11.200" cy="3.400" rx="2.300" ry="1.300" transform="rotate(-45 11.200 3.400)" fill="#f5b63c"/><path d="M10.100 9.600 L12.600 12.600 H11.200 V15.600 H9 V12.600 H7.600Z" fill="#d18d0a"/></svg><span style="left:89.7px;letter-spacing:-0.219px">[Default] Running unauthorized command by non-admin user in command line tools</span><span style="left:553.5px;letter-spacing:-0.415px"></span><span style="left:645.2px;letter-spacing:-0.546px">Enabled</span><span style="left:736.1px;letter-spacing:-0.482px">None</span><svg class="ei" width="14" height="15" viewBox="0 0 14 15"><path d="M0.600 0.500 H6.600 L8.900 2.800 V12.500 H0.600Z" fill="#7aaad7"/><path d="M6.300 0.800 V3.100 H8.600" fill="none" stroke="#dfeaf5" stroke-width=".800"/><path d="M2.300 4.500h3M2.300 6.500h4.500M2.300 8.500h3.500" stroke="#a9c7e6" stroke-width=".700"/><path d="M5.200 14 L5.800 11.500 L11.300 6.200 L13.200 8.100 L7.700 13.500Z" fill="#5a93cc" stroke="#fff" stroke-width=".600"/></svg><a style="left:844.4px;letter-spacing:-0.319px">Edit Alert</a><svg class="vi" width="18" height="16" viewBox="0 0 18 16"><path d="M5.800 0 c0.700 0 1.100 0.400 1.100 1.100 c2.300 0.700 3.100 2.600 3.100 5.200 c0 1.800 0.700 2.800 1.600 3.700 H0 c0.900-0.900 1.600-1.900 1.600-3.700 c0-2.600 0.800-4.500 3.100-5.200 c0-0.700 0.400-1.100 1.100-1.100Z" fill="#76a8d6"/><circle cx="5.800" cy="11.300" r="1.400" fill="#76a8d6"/><circle cx="12.300" cy="10.800" r="2.500" fill="#fff" stroke="#5f98cf" stroke-width="1.600"/><path d="M14.300 12.800 L16.600 15.100" stroke="#5f98cf" stroke-width="1.900" stroke-linecap="round"/></svg><a style="left:956.1px;letter-spacing:-0.331px">View Alert</a></div>
<div class="r" style="top:300.10px"><u style="top:25.1px"></u><i></i><svg class="rk" width="14" height="16" viewBox="0 0 14 16"><path transform="translate(-0.500 0)" d="M0 7.300 L2.800 7 L4.500 4.800 L7.500 4.400 L9.600 6.600 L9.800 9.500 L9 13 L7 15 L4.200 14.600 L4 12.300 L1 13 L2 10.300Z" fill="#f3b030"/><path d="M8.300 5.600 L10.200 4.200" stroke="#f3b030" stroke-width="1.200"/><ellipse cx="11.200" cy="3.400" rx="2.300" ry="1.300" transform="rotate(-45 11.200 3.400)" fill="#f5b63c"/><path d="M10.100 9.600 L12.600 12.600 H11.200 V15.600 H9 V12.600 H7.600Z" fill="#d18d0a"/></svg><span style="left:89.7px;letter-spacing:-0.268px">[Default] Running steganography tools</span><span style="left:553.5px;letter-spacing:-0.415px">All Clients</span><span style="left:645.2px;letter-spacing:-0.546px">Enabled</span><span style="left:736.1px;letter-spacing:-0.482px">None</span><svg class="ei" width="14" height="15" viewBox="0 0 14 15"><path d="M0.600 0.500 H6.600 L8.900 2.800 V12.500 H0.600Z" fill="#7aaad7"/><path d="M6.300 0.800 V3.100 H8.600" fill="none" stroke="#dfeaf5" stroke-width=".800"/><path d="M2.300 4.500h3M2.300 6.500h4.500M2.300 8.500h3.500" stroke="#a9c7e6" stroke-width=".700"/><path d="M5.200 14 L5.800 11.500 L11.300 6.200 L13.200 8.100 L7.700 13.500Z" fill="#5a93cc" stroke="#fff" stroke-width=".600"/></svg><a style="left:844.4px;letter-spacing:-0.319px">Edit Alert</a><svg class="vi" width="18" height="16" viewBox="0 0 18 16"><path d="M5.800 0 c0.700 0 1.100 0.400 1.100 1.100 c2.300 0.700 3.100 2.600 3.100 5.200 c0 1.800 0.700 2.800 1.600 3.700 H0 c0.900-0.900 1.600-1.900 1.600-3.700 c0-2.600 0.800-4.500 3.100-5.200 c0-0.700 0.400-1.100 1.100-1.100Z" fill="#76a8d6"/><circle cx="5.800" cy="11.300" r="1.400" fill="#76a8d6"/><circle cx="12.300" cy="10.800" r="2.500" fill="#fff" stroke="#5f98cf" stroke-width="1.600"/><path d="M14.300 12.800 L16.600 15.100" stroke="#5f98cf" stroke-width="1.900" stroke-linecap="round"/></svg><a style="left:956.1px;letter-spacing:-0.331px">View Alert</a></div>
<div class="r" style="top:325.10px"><u style="top:25.1px"></u><i></i><svg class="rk" width="14" height="16" viewBox="0 0 14 16"><path transform="translate(-0.500 0)" d="M0 7.300 L2.800 7 L4.500 4.800 L7.500 4.400 L9.600 6.600 L9.800 9.500 L9 13 L7 15 L4.200 14.600 L4 12.300 L1 13 L2 10.300Z" fill="#f3b030"/><path d="M8.300 5.600 L10.200 4.200" stroke="#f3b030" stroke-width="1.200"/><ellipse cx="11.200" cy="3.400" rx="2.300" ry="1.300" transform="rotate(-45 11.200 3.400)" fill="#f5b63c"/><path d="M10.100 9.600 L12.600 12.600 H11.200 V15.600 H9 V12.600 H7.600Z" fill="#d18d0a"/></svg><span style="left:89.7px;letter-spacing:-0.290px">[Default] Running software to enable sharing and remote access</span><span style="left:553.5px;letter-spacing:-0.415px">All Clients</span><span style="left:645.2px;letter-spacing:-0.546px">Enabled</span><span style="left:736.1px;letter-spacing:-0.482px">None</span><svg class="ei" width="14" height="15" viewBox="0 0 14 15"><path d="M0.600 0.500 H6.600 L8.900 2.800 V12.500 H0.600Z" fill="#7aaad7"/><path d="M6.300 0.800 V3.100 H8.600" fill="none" stroke="#dfeaf5" stroke-width=".800"/><path d="M2.300 4.500h3M2.300 6.500h4.500M2.300 8.500h3.500" stroke="#a9c7e6" stroke-width=".700"/><path d="M5.200 14 L5.800 11.500 L11.300 6.200 L13.200 8.100 L7.700 13.500Z" fill="#5a93cc" stroke="#fff" stroke-width=".600"/></svg><a style="left:844.4px;letter-spacing:-0.319px">Edit Alert</a><svg class="vi" width="18" height="16" viewBox="0 0 18 16"><path d="M5.800 0 c0.700 0 1.100 0.400 1.100 1.100 c2.300 0.700 3.100 2.600 3.100 5.200 c0 1.800 0.700 2.800 1.600 3.700 H0 c0.900-0.900 1.600-1.900 1.600-3.700 c0-2.600 0.800-4.500 3.100-5.200 c0-0.700 0.400-1.100 1.100-1.100Z" fill="#76a8d6"/><circle cx="5.800" cy="11.300" r="1.400" fill="#76a8d6"/><circle cx="12.300" cy="10.800" r="2.500" fill="#fff" stroke="#5f98cf" stroke-width="1.600"/><path d="M14.300 12.800 L16.600 15.100" stroke="#5f98cf" stroke-width="1.900" stroke-linecap="round"/></svg><a style="left:956.1px;letter-spacing:-0.331px">View Alert</a></div>
<div class="r" style="top:350.10px"><u style="top:25.1px"></u><i></i><svg class="rk" width="14" height="16" viewBox="0 0 14 16"><path transform="translate(-0.500 0)" d="M0 7.300 L2.800 7 L4.500 4.800 L7.500 4.400 L9.600 6.600 L9.800 9.500 L9 13 L7 15 L4.200 14.600 L4 12.300 L1 13 L2 10.300Z" fill="#f3b030"/><path d="M8.300 5.600 L10.200 4.200" stroke="#f3b030" stroke-width="1.200"/><ellipse cx="11.200" cy="3.400" rx="2.300" ry="1.300" transform="rotate(-45 11.200 3.400)" fill="#f5b63c"/><path d="M10.100 9.600 L12.600 12.600 H11.200 V15.600 H9 V12.600 H7.600Z" fill="#d18d0a"/></svg><span style="left:89.7px;letter-spacing:-0.250px">[Default] Running secured or encrypted email client</span><span style="left:553.5px;letter-spacing:-0.415px">All Clients</span><span style="left:645.2px;letter-spacing:-0.546px">Enabled</span><span style="left:736.1px;letter-spacing:-0.482px">None</span><svg class="ei" width="14" height="15" viewBox="0 0 14 15"><path d="M0.600 0.500 H6.600 L8.900 2.800 V12.500 H0.600Z" fill="#7aaad7"/><path d="M6.300 0.800 V3.100 H8.600" fill="none" stroke="#dfeaf5" stroke-width=".800"/><path d="M2.300 4.500h3M2.300 6.500h4.500M2.300 8.500h3.500" stroke="#a9c7e6" stroke-width=".700"/><path d="M5.200 14 L5.800 11.500 L11.300 6.200 L13.200 8.100 L7.700 13.500Z" fill="#5a93cc" stroke="#fff" stroke-width=".600"/></svg><a style="left:844.4px;letter-spacing:-0.319px">Edit Alert</a><svg class="vi" width="18" height="16" viewBox="0 0 18 16"><path d="M5.800 0 c0.700 0 1.100 0.400 1.100 1.100 c2.300 0.700 3.100 2.600 3.100 5.200 c0 1.800 0.700 2.800 1.600 3.700 H0 c0.900-0.900 1.600-1.900 1.600-3.700 c0-2.600 0.800-4.500 3.100-5.200 c0-0.700 0.400-1.100 1.100-1.100Z" fill="#76a8d6"/><circle cx="5.800" cy="11.300" r="1.400" fill="#76a8d6"/><circle cx="12.300" cy="10.800" r="2.500" fill="#fff" stroke="#5f98cf" stroke-width="1.600"/><path d="M14.300 12.800 L16.600 15.100" stroke="#5f98cf" stroke-width="1.900" stroke-linecap="round"/></svg><a style="left:956.1px;letter-spacing:-0.331px">View Alert</a></div>
<div class="r" style="top:375.10px"><u style="top:25.1px"></u><i></i><svg class="rk" width="14" height="16" viewBox="0 0 14 16"><path transform="translate(-0.500 0)" d="M0 7.300 L2.800 7 L4.500 4.800 L7.500 4.400 L9.600 6.600 L9.800 9.500 L9 13 L7 15 L4.200 14.600 L4 12.300 L1 13 L2 10.300Z" fill="#f3b030"/><path d="M8.300 5.600 L10.200 4.200" stroke="#f3b030" stroke-width="1.200"/><ellipse cx="11.200" cy="3.400" rx="2.300" ry="1.300" transform="rotate(-45 11.200 3.400)" fill="#f5b63c"/><path d="M10.100 9.600 L12.600 12.600 H11.200 V15.600 H9 V12.600 H7.600Z" fill="#d18d0a"/></svg><span style="left:89.7px;letter-spacing:-0.228px">[Default] Running port scanning tools</span><span style="left:553.5px;letter-spacing:-0.415px">All Clients</span><span style="left:645.2px;letter-spacing:-0.546px">Enabled</span><span style="left:736.1px;letter-spacing:-0.482px">None</span><svg class="ei" width="14" height="15" viewBox="0 0 14 15"><path d="M0.600 0.500 H6.600 L8.900 2.800 V12.500 H0.600Z" fill="#7aaad7"/><path d="M6.300 0.800 V3.100 H8.600" fill="none" stroke="#dfeaf5" stroke-width=".800"/><path d="M2.300 4.500h3M2.300 6.500h4.500M2.300 8.500h3.500" stroke="#a9c7e6" stroke-width=".700"/><path d="M5.200 14 L5.800 11.500 L11.300 6.200 L13.200 8.100 L7.700 13.500Z" fill="#5a93cc" stroke="#fff" stroke-width=".600"/></svg><a style="left:844.4px;letter-spacing:-0.319px">Edit Alert</a><svg class="vi" width="18" height="16" viewBox="0 0 18 16"><path d="M5.800 0 c0.700 0 1.100 0.400 1.100 1.100 c2.300 0.700 3.100 2.600 3.100 5.200 c0 1.800 0.700 2.800 1.600 3.700 H0 c0.900-0.900 1.600-1.900 1.600-3.700 c0-2.600 0.800-4.500 3.100-5.200 c0-0.700 0.400-1.100 1.100-1.100Z" fill="#76a8d6"/><circle cx="5.800" cy="11.300" r="1.400" fill="#76a8d6"/><circle cx="12.300" cy="10.800" r="2.500" fill="#fff" stroke="#5f98cf" stroke-width="1.600"/><path d="M14.300 12.800 L16.600 15.100" stroke="#5f98cf" stroke-width="1.900" stroke-linecap="round"/></svg><a style="left:956.1px;letter-spacing:-0.331px">View Alert</a></div>
<div class="r" style="top:400.10px"><u style="top:25.1px"></u><i></i><svg class="rk" width="14" height="16" viewBox="0 0 14 16"><path transform="translate(-0.500 0)" d="M0 7.300 L2.800 7 L4.500 4.800 L7.500 4.400 L9.600 6.600 L9.800 9.500 L9 13 L7 15 L4.200 14.600 L4 12.300 L1 13 L2 10.300Z" fill="#f3b030"/><path d="M8.300 5.600 L10.200 4.200" stroke="#f3b030" stroke-width="1.200"/><ellipse cx="11.200" cy="3.400" rx="2.300" ry="1.300" transform="rotate(-45 11.200 3.400)" fill="#f5b63c"/><path d="M10.100 9.600 L12.600 12.600 H11.200 V15.600 H9 V12.600 H7.600Z" fill="#d18d0a"/></svg><span style="left:89.7px;letter-spacing:-0.282px">[Default] Running P2P tools to get or share copyrighted media</span><span style="left:553.5px;letter-spacing:-0.415px">All Clients</span><span style="left:645.2px;letter-spacing:-0.546px">Enabled</span><span style="left:736.1px;letter-spacing:-0.482px">None</span><svg class="ei" width="14" height="15" viewBox="0 0 14 15"><path d="M0.600 0.500 H6.600 L8.900 2.800 V12.500 H0.600Z" fill="#7aaad7"/><path d="M6.300 0.800 V3.100 H8.600" fill="none" stroke="#dfeaf5" stroke-width=".800"/><path d="M2.300 4.500h3M2.300 6.500h4.500M2.300 8.500h3.500" stroke="#a9c7e6" stroke-width=".700"/><path d="M5.200 14 L5.800 11.500 L11.300 6.200 L13.200 8.100 L7.700 13.500Z" fill="#5a93cc" stroke="#fff" stroke-width=".600"/></svg><a style="left:844.4px;letter-spacing:-0.319px">Edit Alert</a><svg class="vi" width="18" height="16" viewBox="0 0 18 16"><path d="M5.800 0 c0.700 0 1.100 0.400 1.100 1.100 c2.300 0.700 3.100 2.600 3.100 5.200 c0 1.800 0.700 2.800 1.600 3.700 H0 c0.900-0.900 1.600-1.900 1.600-3.700 c0-2.600 0.800-4.500 3.100-5.200 c0-0.700 0.400-1.100 1.100-1.100Z" fill="#76a8d6"/><circle cx="5.800" cy="11.300" r="1.400" fill="#76a8d6"/><circle cx="12.300" cy="10.800" r="2.500" fill="#fff" stroke="#5f98cf" stroke-width="1.600"/><path d="M14.300 12.800 L16.600 15.100" stroke="#5f98cf" stroke-width="1.900" stroke-linecap="round"/></svg><a style="left:956.1px;letter-spacing:-0.331px">View Alert</a></div>
<div class="r" style="top:425.10px"><u style="top:25.1px"></u><i></i><svg class="rk" width="14" height="16" viewBox="0 0 14 16"><path transform="translate(-0.500 0)" d="M0 7.300 L2.800 7 L4.500 4.800 L7.500 4.400 L9.600 6.600 L9.800 9.500 L9 13 L7 15 L4.200 14.600 L4 12.300 L1 13 L2 10.300Z" fill="#f3b030"/><path d="M8.300 5.600 L10.200 4.200" stroke="#f3b030" stroke-width="1.200"/><ellipse cx="11.200" cy="3.400" rx="2.300" ry="1.300" transform="rotate(-45 11.200 3.400)" fill="#f5b63c"/><path d="M10.100 9.600 L12.600 12.600 H11.200 V15.600 H9 V12.600 H7.600Z" fill="#d18d0a"/></svg><span style="left:89.7px;letter-spacing:-0.288px">[Default] Running DBA tools</span><span style="left:553.5px;letter-spacing:-0.415px">All Clients</span><span style="left:645.2px;letter-spacing:-0.546px">Enabled</span><span style="left:736.1px;letter-spacing:-0.482px">None</span><svg class="ei" width="14" height="15" viewBox="0 0 14 15"><path d="M0.600 0.500 H6.600 L8.900 2.800 V12.500 H0.600Z" fill="#7aaad7"/><path d="M6.300 0.800 V3.100 H8.600" fill="none" stroke="#dfeaf5" stroke-width=".800"/><path d="M2.300 4.500h3M2.300 6.500h4.500M2.300 8.500h3.500" stroke="#a9c7e6" stroke-width=".700"/><path d="M5.200 14 L5.800 11.500 L11.300 6.200 L13.200 8.100 L7.700 13.500Z" fill="#5a93cc" stroke="#fff" stroke-width=".600"/></svg><a style="left:844.4px;letter-spacing:-0.319px">Edit Alert</a><svg class="vi" width="18" height="16" viewBox="0 0 18 16"><path d="M5.800 0 c0.700 0 1.100 0.400 1.100 1.100 c2.300 0.700 3.100 2.600 3.100 5.200 c0 1.800 0.700 2.800 1.600 3.700 H0 c0.900-0.900 1.600-1.900 1.600-3.700 c0-2.600 0.800-4.500 3.100-5.200 c0-0.700 0.400-1.100 1.100-1.100Z" fill="#76a8d6"/><circle cx="5.800" cy="11.300" r="1.400" fill="#76a8d6"/><circle cx="12.300" cy="10.800" r="2.500" fill="#fff" stroke="#5f98cf" stroke-width="1.600"/><path d="M14.300 12.800 L16.600 15.100" stroke="#5f98cf" stroke-width="1.900" stroke-linecap="round"/></svg><a style="left:956.1px;letter-spacing:-0.331px">View Alert</a></div>
<div class="r" style="top:450.10px"><u style="top:25.1px"></u><i></i><svg class="rk" width="14" height="16" viewBox="0 0 14 16"><path transform="translate(-0.500 0)" d="M0 7.300 L2.800 7 L4.500 4.800 L7.500 4.400 L9.600 6.600 L9.800 9.500 L9 13 L7 15 L4.200 14.600 L4 12.300 L1 13 L2 10.300Z" fill="#f3b030"/><path d="M8.300 5.600 L10.200 4.200" stroke="#f3b030" stroke-width="1.200"/><ellipse cx="11.200" cy="3.400" rx="2.300" ry="1.300" transform="rotate(-45 11.200 3.400)" fill="#f5b63c"/><path d="M10.100 9.600 L12.600 12.600 H11.200 V15.600 H9 V12.600 H7.600Z" fill="#d18d0a"/></svg><span style="left:89.7px;letter-spacing:-0.312px">[Default] Running Command Line Shell programs</span><span style="left:553.5px;letter-spacing:-0.415px">All Clients</span><span style="left:645.2px;letter-spacing:-0.546px">Enabled</span><span style="left:736.1px;letter-spacing:-0.482px">None</span><svg class="ei" width="14" height="15" viewBox="0 0 14 15"><path d="M0.600 0.500 H6.600 L8.900 2.800 V12.500 H0.600Z" fill="#7aaad7"/><path d="M6.300 0.800 V3.100 H8.600" fill="none" stroke="#dfeaf5" stroke-width=".800"/><path d="M2.300 4.500h3M2.300 6.500h4.500M2.300 8.500h3.500" stroke="#a9c7e6" stroke-width=".700"/><path d="M5.200 14 L5.800 11.500 L11.300 6.200 L13.200 8.100 L7.700 13.500Z" fill="#5a93cc" stroke="#fff" stroke-width=".600"/></svg><a style="left:844.4px;letter-spacing:-0.319px">Edit Alert</a><svg class="vi" width="18" height="16" viewBox="0 0 18 16"><path d="M5.800 0 c0.700 0 1.100 0.400 1.100 1.100 c2.300 0.700 3.100 2.600 3.100 5.200 c0 1.800 0.700 2.800 1.600 3.700 H0 c0.900-0.900 1.600-1.900 1.600-3.700 c0-2.600 0.800-4.500 3.100-5.200 c0-0.700 0.400-1.100 1.100-1.100Z" fill="#76a8d6"/><circle cx="5.800" cy="11.300" r="1.400" fill="#76a8d6"/><circle cx="12.300" cy="10.800" r="2.500" fill="#fff" stroke="#5f98cf" stroke-width="1.600"/><path d="M14.300 12.800 L16.600 15.100" stroke="#5f98cf" stroke-width="1.900" stroke-linecap="round"/></svg><a style="left:956.1px;letter-spacing:-0.331px">View Alert</a></div>
</div><div id="scr"></div>
<div id="pg"><div class="p" style="left:0;background:#517ca8">1</div><div class="p" style="left:27.600px;background:#86a3c2">2</div></div>
</div></div></div></body></html>
